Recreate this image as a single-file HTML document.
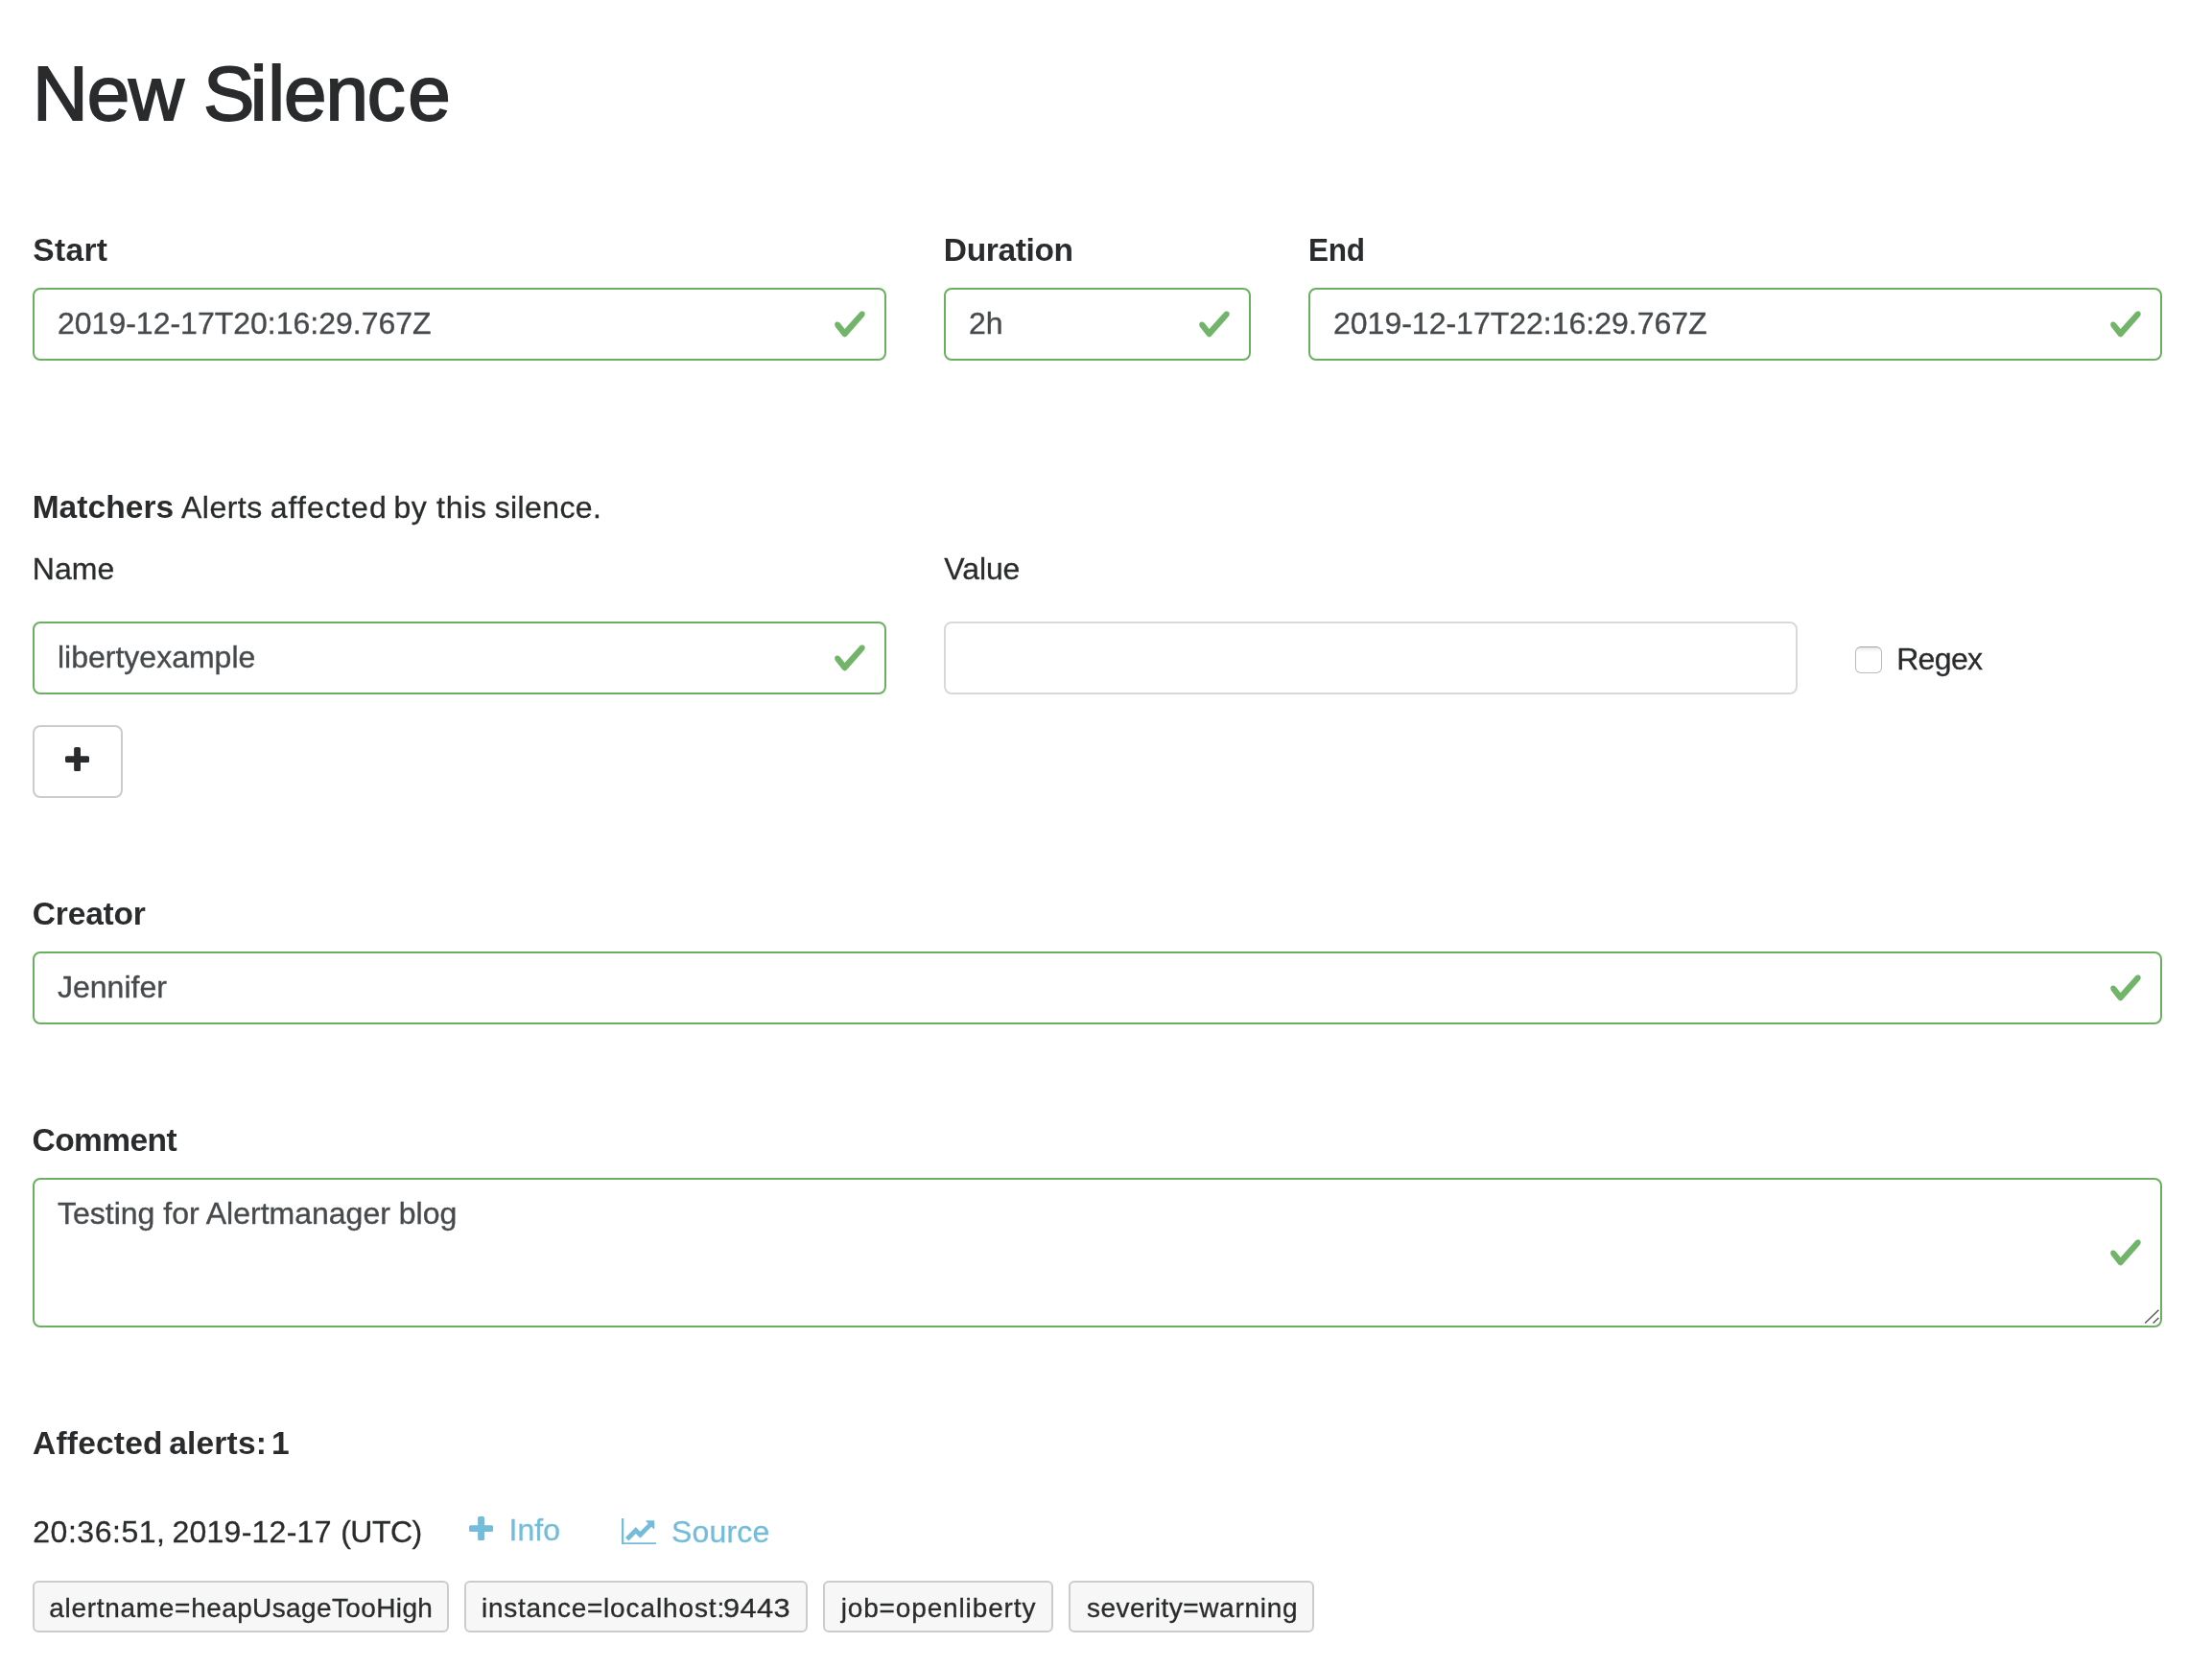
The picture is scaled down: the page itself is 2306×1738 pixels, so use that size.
<!DOCTYPE html>
<html lang="en">
<head>
<meta charset="utf-8">
<title>New Silence</title>
<style>
  html, body { margin: 0; padding: 0; background: #fff; }
  body {
    width: 2306px; height: 1738px; overflow: hidden; position: relative;
    font-family: "Liberation Sans", sans-serif;
    font-size: 32px; line-height: 48px; color: #292b2c;
    -webkit-font-smoothing: antialiased;
  }
  main { display: block; position: relative; width: 2306px; height: 1738px; will-change: transform; }
  .abs { position: absolute; white-space: nowrap; margin: 0; }
  h1.title {
    left: 34px; top: 53.5px; font-size: 80px; line-height: 88px; font-weight: 400;
    color: #292b2c; -webkit-text-stroke: 1.8px #292b2c; letter-spacing: -1.1px;
  }
  label.lbl { font-weight: 700; font-size: 33.5px; line-height: 48px; display: block; }
  .txt { font-size: 32px; line-height: 48px; -webkit-text-stroke: 0.3px currentColor; }
  .txt strong, .txt.b { -webkit-text-stroke: 0; font-size: 33.5px; }
  .w { position: absolute; top: 0; }
  .ctl {
    position: absolute; box-sizing: border-box; height: 76px;
    border: 2px solid #d9d9d9; border-radius: 8px; background: #fff;
    padding: 16px 24px; font-size: 32px; line-height: 40px; color: #464a4c;
    white-space: nowrap; overflow: hidden;
  }
  .ctl.ok { border-color: #6bb061; padding-right: 72px; }
  .ctl span { position: relative; top: -1px; -webkit-text-stroke: 0.35px currentColor; }
  .chk { position: absolute; width: 36px; height: 36px; right: 18px; top: 50%; margin-top: -18px; }
  .btnp {
    position: absolute; box-sizing: border-box; left: 34px; top: 756px; width: 94px; height: 76px;
    border: 2px solid #ccc; border-radius: 8px; background: #fff;
  }
  .btnp svg { position: absolute; left: 32px; top: 21px; }
  .cb {
    position: absolute; box-sizing: border-box; left: 1934px; top: 674px; width: 28px; height: 28px;
    border: 1px solid #b9b9b9; border-top-color: #a4a4a4; border-bottom-color: #bcbcbc; border-radius: 6px;
    background: linear-gradient(to bottom, #e4e4e4 0px, #f3f3f3 2px, #fcfcfc 4px, #fff 6px) padding-box; background-origin: padding-box;
  }
  .link { color: #74bcda; }
  .tag span { position: absolute; top: 2px; }
  .tag {
    position: absolute; box-sizing: border-box; top: 1648px; height: 54px;
    border: 2px solid #ccc; border-radius: 6px; background: #f7f7f7;
    font-size: 28px; line-height: 50px; padding: 0 0 0 16px; white-space: nowrap; color: #292b2c; -webkit-text-stroke: 0.3px currentColor;
  }
</style>
</head>
<body>
<main>
  <h1 class="abs title" id="title">New <span style="letter-spacing:-4.6px">S</span><span style="letter-spacing:0.9px">i</span>len<span style="letter-spacing:2.4px">c</span>e</h1>

  <form>
    <!-- Start / Duration / End -->
    <label class="abs lbl" id="l_start" style="left:34.21px; top:237px; letter-spacing:0.370px;">Start</label>
    <div class="ctl ok" id="i_start" style="left:34px; top:300px; width:890px;"><span id="i_start_t">2019-12-17T20:16:29.767Z</span>
      <svg class="chk" viewBox="0 0 8 8"><path fill="#72b56a" d="M2.3 6.73L.6 4.53c-.4-1.04.46-1.4 1.1-.8l1.1 1.4 3.4-3.8c.6-.63 1.6-.27 1.2.7l-4 4.6c-.43.5-.8.4-1.1.1z"/></svg>
    </div>

    <label class="abs lbl" id="l_dur" style="left:983.82px; top:237px; letter-spacing:-0.362px;">Duration</label>
    <div class="ctl ok" id="i_dur" style="left:984px; top:300px; width:320px;"><span id="i_dur_t">2h</span>
      <svg class="chk" viewBox="0 0 8 8"><path fill="#72b56a" d="M2.3 6.73L.6 4.53c-.4-1.04.46-1.4 1.1-.8l1.1 1.4 3.4-3.8c.6-.63 1.6-.27 1.2.7l-4 4.6c-.43.5-.8.4-1.1.1z"/></svg>
    </div>

    <label class="abs lbl" id="l_end" style="left:1364.19px; top:237px; letter-spacing:-0.275px; transform-origin:0 0; transform:scaleX(0.94);">End</label>
    <div class="ctl ok" id="i_end" style="left:1364px; top:300px; width:890px;"><span id="i_end_t">2019-12-17T22:16:29.767Z</span>
      <svg class="chk" viewBox="0 0 8 8"><path fill="#72b56a" d="M2.3 6.73L.6 4.53c-.4-1.04.46-1.4 1.1-.8l1.1 1.4 3.4-3.8c.6-.63 1.6-.27 1.2.7l-4 4.6c-.43.5-.8.4-1.1.1z"/></svg>
    </div>

    <!-- Matchers -->
    <div class="abs txt line" id="l_match" style="left:0; top:505px; width:700px; height:48px;">
      <strong class="w" id="w_m1" style="left:33.67px; letter-spacing:0.056px;">Matchers</strong>
      <span class="w" id="w_m2" style="left:189.01px; letter-spacing:0.476px;">Alerts</span>
      <span class="w" id="w_m3" style="left:281.70px; letter-spacing:1.101px;">affected</span>
      <span class="w" id="w_m4" style="left:410.62px; letter-spacing:0.315px;">by</span>
      <span class="w" id="w_m5" style="left:455.10px; letter-spacing:0.716px;">this</span>
      <span class="w" id="w_m6" style="left:515.65px; letter-spacing:0.395px;">silence.</span>
    </div>
    <div class="abs txt" id="l_name" style="left:33.86px; top:569px; letter-spacing:-0.001px;">Name</div>
    <div class="abs txt" id="l_value" style="left:984.36px; top:569px; letter-spacing:-0.104px;">Value</div>

    <div class="ctl ok" id="i_name" style="left:34px; top:648px; width:890px;"><span id="i_name_t">libertyexample</span>
      <svg class="chk" viewBox="0 0 8 8"><path fill="#72b56a" d="M2.3 6.73L.6 4.53c-.4-1.04.46-1.4 1.1-.8l1.1 1.4 3.4-3.8c.6-.63 1.6-.27 1.2.7l-4 4.6c-.43.5-.8.4-1.1.1z"/></svg>
    </div>
    <div class="ctl" id="i_value" style="left:984px; top:648px; width:890px;"></div>

    <div class="cb" id="cb"></div>
    <div class="abs txt" id="l_regex" style="left:1977.16px; top:663px; letter-spacing:-0.658px;">Regex</div>

    <div class="btnp" id="btnp">
      <svg width="25.14" height="25.14" viewBox="192 128 1408 1408"><path fill="#292b2c" d="M1600 736v192q0 40-28 68t-68 28h-416v416q0 40-28 68t-68 28h-192q-40 0-68-28t-28-68v-416h-416q-40 0-68-28t-28-68v-192q0-40 28-68t68-28h416v-416q0-40 28-68t68-28h192q40 0 68 28t28 68v416h416q40 0 68 28t28 68z"/></svg>
    </div>

    <!-- Creator -->
    <label class="abs lbl" id="l_creator" style="left:33.86px; top:929px; letter-spacing:-0.192px;">Creator</label>
    <div class="ctl ok" id="i_creator" style="left:34px; top:992px; width:2220px;"><span id="i_creator_t">Jennifer</span>
      <svg class="chk" viewBox="0 0 8 8"><path fill="#72b56a" d="M2.3 6.73L.6 4.53c-.4-1.04.46-1.4 1.1-.8l1.1 1.4 3.4-3.8c.6-.63 1.6-.27 1.2.7l-4 4.6c-.43.5-.8.4-1.1.1z"/></svg>
    </div>

    <!-- Comment -->
    <label class="abs lbl" id="l_comment" style="left:33.61px; top:1165px; letter-spacing:-0.590px;">Comment</label>
    <div class="ctl ok" id="i_comment" style="left:34px; top:1228px; width:2220px; height:156px;"><span id="i_comment_t">Testing for Alertmanager blog</span>
      <svg class="chk" viewBox="0 0 8 8"><path fill="#72b56a" d="M2.3 6.73L.6 4.53c-.4-1.04.46-1.4 1.1-.8l1.1 1.4 3.4-3.8c.6-.63 1.6-.27 1.2.7l-4 4.6c-.43.5-.8.4-1.1.1z"/></svg>
      <svg style="position:absolute; right:-2px; bottom:0;" width="20" height="20" viewBox="0 0 20 20"><path d="M2.2 17.4L16.4 3.7M10.6 17.4L16.4 11.9" stroke="#555" stroke-width="1.4" fill="none"/></svg>
    </div>
  </form>

  <!-- Affected alerts -->
  <div class="abs txt b line" id="l_aff" style="left:0; top:1481px; width:400px; height:48px; font-weight:700;">
    <span class="w" id="w_a1" style="left:34.00px; letter-spacing:0.213px;">Affected</span>
    <span class="w" id="w_a2" style="left:176.20px; letter-spacing:0.199px;">alerts:</span>
    <span class="w" id="w_a3" style="left:282.93px; letter-spacing:0.000px;">1</span>
  </div>

  <div class="abs txt line" id="l_time" style="left:0; top:1573px; width:460px; height:48px;">
    <span class="w" id="w_t1" style="left:34.27px; letter-spacing:0.533px;">20:36:51,</span>
    <span class="w" id="w_t2" style="left:179.42px; letter-spacing:0.261px;">2019-12-17</span>
    <span class="w" id="w_t3" style="left:355.18px; letter-spacing:-0.512px;">(UTC)</span>
  </div>

  <svg class="abs" id="ic_plus" style="left:489.3px; top:1581px;" width="25.14" height="25.14" viewBox="192 128 1408 1408"><path fill="#74bcda" d="M1600 736v192q0 40-28 68t-68 28h-416v416q0 40-28 68t-68 28h-192q-40 0-68-28t-28-68v-416h-416q-40 0-68-28t-28-68v-192q0-40 28-68t68-28h416v-416q0-40 28-68t68-28h192q40 0 68 28t28 68v416h416q40 0 68 28t28 68z"/></svg>
  <div class="abs txt link" id="l_info" style="left:530.53px; top:1571px; letter-spacing:0.071px;">Info</div>

  <svg class="abs" id="ic_chart" style="left:647.8px; top:1582.7px;" width="36.57" height="27.43" viewBox="0 128 2048 1536"><path fill="#74bcda" d="M2048 1536v128h-2048v-1536h128v1408h1920zm-128-1248v435q0 21-19.500 29.500t-35.500-7.500l-121-121-633 633q-10 10-23 10t-23-10l-233-233-416 416-192-192 585-585q10-10 23-10t23 10l233 233 464-464-121-121q-16-16-7.500-35.500t29.500-19.500h435q14 0 23 9t9 23z"/></svg>
  <div class="abs txt link" id="l_source" style="left:700.12px; top:1573px; letter-spacing:0.159px;">Source</div>

  <div class="tag" id="t1" style="left:34px; width:434px;"><span id="t1a" style="left:15.34px; letter-spacing:0.671px;">alertname=</span><span id="t1b" style="left:163.30px; letter-spacing:0.377px;">heapUsageTooHigh</span></div>
  <div class="tag" id="t2" style="left:484px; width:358px;"><span id="t2a" style="left:16.12px; letter-spacing:0.703px;">instance=</span><span id="t2b" style="left:143.01px; letter-spacing:0.879px;">localhost:</span><span id="t2c" style="left:268.47px; letter-spacing:0.365px; transform-origin:0 0; transform:scaleX(1.1);">9443</span></div>
  <div class="tag" id="t3" style="left:858px; width:240px;"><span id="t3a" style="left:16.72px; letter-spacing:0.831px;">job=</span><span id="t3b" style="left:73.75px; letter-spacing:0.872px;">openliberty</span></div>
  <div class="tag" id="t4" style="left:1114px; width:256px;"><span id="t4a" style="left:17.03px; letter-spacing:0.458px;">severity=</span><span id="t4b" style="left:134.18px; letter-spacing:0.731px;">warning</span></div>
</main>
</body>
</html>
